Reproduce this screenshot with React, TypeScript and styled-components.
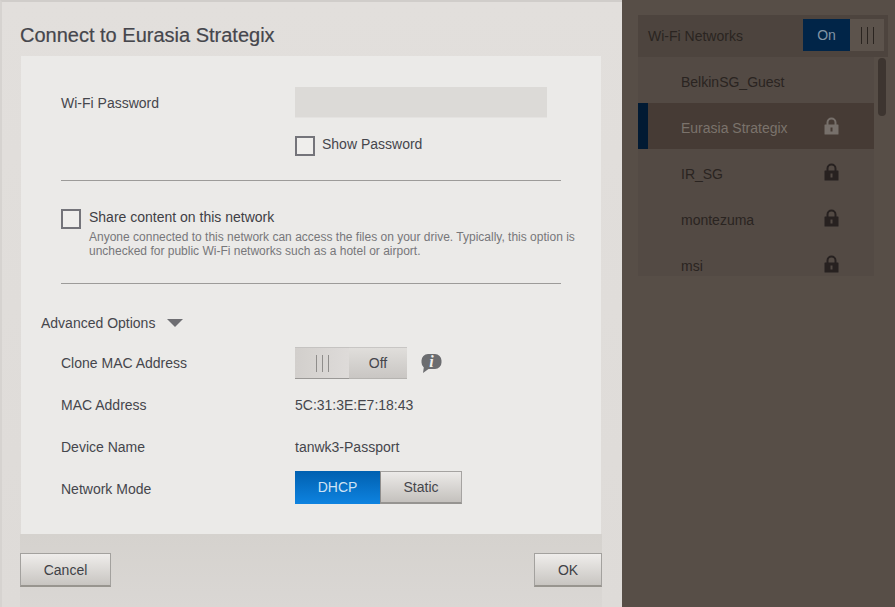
import styled, { createGlobalStyle } from "styled-components";

const GlobalStyle = createGlobalStyle`
  html, body {
    margin: 0;
    padding: 0;
    background: #574e47;
  }
  * {
    box-sizing: border-box;
  }
`;

const Page = styled.div`
  display: flex;
  width: 895px;
  height: 607px;
  overflow: hidden;
  font-family: "Liberation Sans", Arial, sans-serif;
  color: #44444a;
`;

const Dialog = styled.div`
  width: 622px;
  height: 607px;
  display: flex;
  flex-direction: column;
  padding: 0 21px 0 19px;
  background: linear-gradient(180deg, #e2dfdc 0%, #dedbd8 100%);
  border-top: 2px solid #d0cdca;
  border-left: 2px solid #d6d3d0;
`;

const Title = styled.h1`
  height: 54px;
  margin: 0 0 0 -1px;
  padding-top: 21px;
  font-size: 20px;
  line-height: 24px;
  font-weight: 400;
  color: #45464c;
  -webkit-text-stroke: 0.2px #45464c;
`;

const Panel = styled.div`
  height: 478px;
  flex: none;
  padding: 31px 40px 0 40px;
  background: #ebeae8;
`;

const PasswordRow = styled.div`
  display: flex;
  align-items: center;
  height: 31px;
`;

const FieldLabel = styled.div`
  width: 234px;
  font-size: 14px;
  color: #45464c;
`;

const PasswordInput = styled.div`
  width: 252px;
  height: 31px;
  background: #dcdad7;
  border-bottom: 1px solid #e4e2e0;
`;

const ShowPasswordRow = styled.div`
  display: flex;
  align-items: center;
  gap: 7px;
  margin: 18px 0 0 234px;
  font-size: 14px;
  color: #45464c;
`;

const ShowPasswordLabel = styled.span`
  margin-bottom: 4px;
`;

const Checkbox = styled.div`
  width: 20px;
  height: 20px;
  flex: none;
  border: 2px solid #74747a;
  background: #efeeec;
`;

const Divider = styled.div<{ $top: number }>`
  width: 500px;
  height: 1px;
  margin-top: ${(p) => p.$top}px;
  background: #9c9b99;
`;

const ShareRow = styled.div`
  display: flex;
  gap: 8px;
  margin-top: 28px;
`;

const ShareTitle = styled.div`
  font-size: 14px;
  line-height: 16px;
  color: #3f4045;
`;

const ShareHint = styled.div`
  width: 500px;
  margin-top: 5px;
  font-size: 12px;
  line-height: 14px;
  color: #77777a;
  white-space: nowrap;
`;

const AdvancedToggle = styled.div`
  display: flex;
  align-items: center;
  gap: 12px;
  margin: 30px 0 10px -20px;
  height: 18px;
  font-size: 14px;
  color: #45464c;
`;

const Triangle = styled.div`
  width: 0;
  height: 0;
  border-left: 8px solid transparent;
  border-right: 8px solid transparent;
  border-top: 8px solid #6e6e72;
`;

const OptionRow = styled.div`
  display: grid;
  grid-template-columns: 234px auto;
  justify-content: start;
  align-items: center;
  height: 42px;
  font-size: 14px;
  color: #45464c;
`;

const OptionControl = styled.div`
  display: flex;
  align-items: center;
  gap: 14px;
`;

const Switch = styled.div`
  display: flex;
  width: 112px;
  height: 32px;
`;

const SwitchGrip = styled.div`
  width: 54px;
  display: flex;
  align-items: center;
  justify-content: center;
  gap: 5px;
  background: linear-gradient(90deg, #d2cfcc, #dedbd9);
  border-bottom: 1px solid #9a9896;
  border-top: 1px solid #c5c3c1;
`;

const GripBar = styled.span<{ $dark?: boolean }>`
  width: 1px;
  height: 17px;
  background: ${(p) => (p.$dark ? "#2a2420" : "#8f8d8b")};
`;

const SwitchLabel = styled.div`
  flex: 1;
  display: flex;
  align-items: center;
  justify-content: center;
  font-size: 14px;
  color: #45464c;
  background: linear-gradient(180deg, #e0dedb, #c9c6c3);
  border-top: 1px solid #c8c6c4;
  border-bottom: 1px solid #b5b3b0;
`;

const Segmented = styled.div`
  display: flex;
  height: 33px;
  margin-bottom: 4px;
  font-size: 14px;
`;

const SegmentActive = styled.div`
  width: 85px;
  display: flex;
  align-items: center;
  justify-content: center;
  color: #cfe3f5;
  background: linear-gradient(180deg, #0060b0, #0e83e0);
`;

const SegmentIdle = styled.div`
  width: 82px;
  display: flex;
  align-items: center;
  justify-content: center;
  color: #45464c;
  background: linear-gradient(180deg, #eceae8, #c4c1bd);
  border: 1px solid #a5a3a1;
  border-bottom: 2px solid #969491;
  border-left: 1px solid #8f8d8b;
`;

const Footer = styled.div`
  flex: 1;
  display: flex;
  align-items: flex-start;
  justify-content: space-between;
  padding-top: 19px;
  margin: 0 -1px;
  background: linear-gradient(180deg, #d5d2ce, #dad7d4);
`;

const DialogButton = styled.div<{ $width: number }>`
  width: ${(p) => p.$width}px;
  height: 34px;
  display: flex;
  align-items: center;
  justify-content: center;
  font-size: 14px;
  color: #404146;
  background: linear-gradient(180deg, #efedeb, #c8c5c1);
  border: 1px solid #a3a19e;
  border-bottom: 2px solid #98958f;
`;

const Sidebar = styled.div`
  flex: 1;
  padding: 15px 7px 0 16px;
  background: #574e47;
`;

const NetworksHeader = styled.div`
  height: 42px;
  display: flex;
  align-items: center;
  justify-content: space-between;
  padding: 0 4px 0 10px;
  background: #4d443e;
  font-size: 14px;
  color: #2a2421;
`;

const NetworkSwitch = styled.div`
  display: flex;
  width: 81px;
  height: 32px;
  margin-bottom: 2px;
`;

const NetworkOn = styled.div`
  width: 47px;
  display: flex;
  align-items: center;
  justify-content: center;
  font-size: 14px;
  color: #8195a6;
  background: #012548;
`;

const NetworkGrip = styled.div`
  flex: 1;
  display: flex;
  align-items: center;
  justify-content: center;
  gap: 5px;
  background: #5c534c;
`;

const ListArea = styled.div`
  display: flex;
  gap: 4px;
  height: 219px;
  overflow: hidden;
`;

const NetworkList = styled.div`
  width: 236px;
`;

const NetworkRow = styled.div<{ $selected?: boolean }>`
  display: flex;
  align-items: center;
  justify-content: space-between;
  height: 46px;
  padding: 0 35px 0 ${(p) => (p.$selected ? "33px" : "43px")};
  font-size: 14px;
  color: ${(p) => (p.$selected ? "#7b736c" : "#2a2421")};
  background: ${(p) => (p.$selected ? "#463b35" : "#534a44")};
  border-left: ${(p) => (p.$selected ? "10px solid #011a33" : "none")};
`;

const NetworkName = styled.span`
  margin-top: 4px;
`;

const ScrollThumb = styled.div`
  width: 8px;
  height: 58px;
  margin-top: 1px;
  border-radius: 4px;
  background: #3d3530;
`;

const InfoIcon = () => (
  <svg width="21" height="21" viewBox="0 0 21 21">
    <path
      d="M7 1h7a6.500 6.500 0 0 1 6.500 6.500v2A6.500 6.500 0 0 1 14 16H7.500L2 20l.8-5.500A6.500 6.500 0 0 1 .5 9.500v-2A6.500 6.500 0 0 1 7 1z"
      fill="#6c6d70"
    />
    <text x="10.500" y="14" fontFamily="Liberation Serif, serif" fontSize="16" fontWeight="700" fontStyle="italic" textAnchor="middle" fill="#f1f0ee">
      i
    </text>
  </svg>
);

const LockIcon = ({ color, hole }: { color: string; hole: string }) => (
  <svg width="15" height="18" viewBox="0 0 15 18" style={{ flex: "none" }}>
    <path d="M3.500 8V5.500a4 4 0 0 1 8 0V8" fill="none" stroke={color} strokeWidth="2" />
    <rect x="0.500" y="7.500" width="14" height="10" rx="0.500" fill={color} />
    <rect x="6.500" y="10.500" width="2" height="4" fill={hole} />
  </svg>
);

const networks = [
  { name: "BelkinSG_Guest", locked: false },
  { name: "Eurasia Strategix", locked: true, selected: true },
  { name: "IR_SG", locked: true },
  { name: "montezuma", locked: true },
  { name: "msi", locked: true },
];

function App() {
  return (
    <>
      <GlobalStyle />
      <Page>
        <Dialog>
          <Title>Connect to Eurasia Strategix</Title>
          <Panel>
            <PasswordRow>
              <FieldLabel>Wi-Fi Password</FieldLabel>
              <PasswordInput />
            </PasswordRow>
            <ShowPasswordRow>
              <Checkbox />
              <ShowPasswordLabel>Show Password</ShowPasswordLabel>
            </ShowPasswordRow>
            <Divider $top={24} />
            <ShareRow>
              <Checkbox />
              <div>
                <ShareTitle>Share content on this network</ShareTitle>
                <ShareHint>
                  Anyone connected to this network can access the files on your drive. Typically, this option is
                  <br />
                  unchecked for public Wi-Fi networks such as a hotel or airport.
                </ShareHint>
              </div>
            </ShareRow>
            <Divider $top={25} />
            <AdvancedToggle>
              Advanced Options
              <Triangle />
            </AdvancedToggle>
            <OptionRow>
              Clone MAC Address
              <OptionControl>
                <Switch>
                  <SwitchGrip>
                    <GripBar />
                    <GripBar />
                    <GripBar />
                  </SwitchGrip>
                  <SwitchLabel>Off</SwitchLabel>
                </Switch>
                <InfoIcon />
              </OptionControl>
            </OptionRow>
            <OptionRow>
              MAC Address
              <span>5C:31:3E:E7:18:43</span>
            </OptionRow>
            <OptionRow>
              Device Name
              <span>tanwk3-Passport</span>
            </OptionRow>
            <OptionRow>
              Network Mode
              <Segmented>
                <SegmentActive>DHCP</SegmentActive>
                <SegmentIdle>Static</SegmentIdle>
              </Segmented>
            </OptionRow>
          </Panel>
          <Footer>
            <DialogButton $width={91}>Cancel</DialogButton>
            <DialogButton $width={68}>OK</DialogButton>
          </Footer>
        </Dialog>
        <Sidebar>
          <NetworksHeader>
            Wi-Fi Networks
            <NetworkSwitch>
              <NetworkOn>On</NetworkOn>
              <NetworkGrip>
                <GripBar $dark />
                <GripBar $dark />
                <GripBar $dark />
              </NetworkGrip>
            </NetworkSwitch>
          </NetworksHeader>
          <ListArea>
            <NetworkList>
              {networks.map((n) => (
                <NetworkRow key={n.name} $selected={n.selected}>
                  <NetworkName>{n.name}</NetworkName>
                  {n.locked && (
                    <LockIcon
                      color={n.selected ? "#77706b" : "#272120"}
                      hole={n.selected ? "#463b35" : "#534a44"}
                    />
                  )}
                </NetworkRow>
              ))}
            </NetworkList>
            <ScrollThumb />
          </ListArea>
        </Sidebar>
      </Page>
    </>
  );
}

export default App;
